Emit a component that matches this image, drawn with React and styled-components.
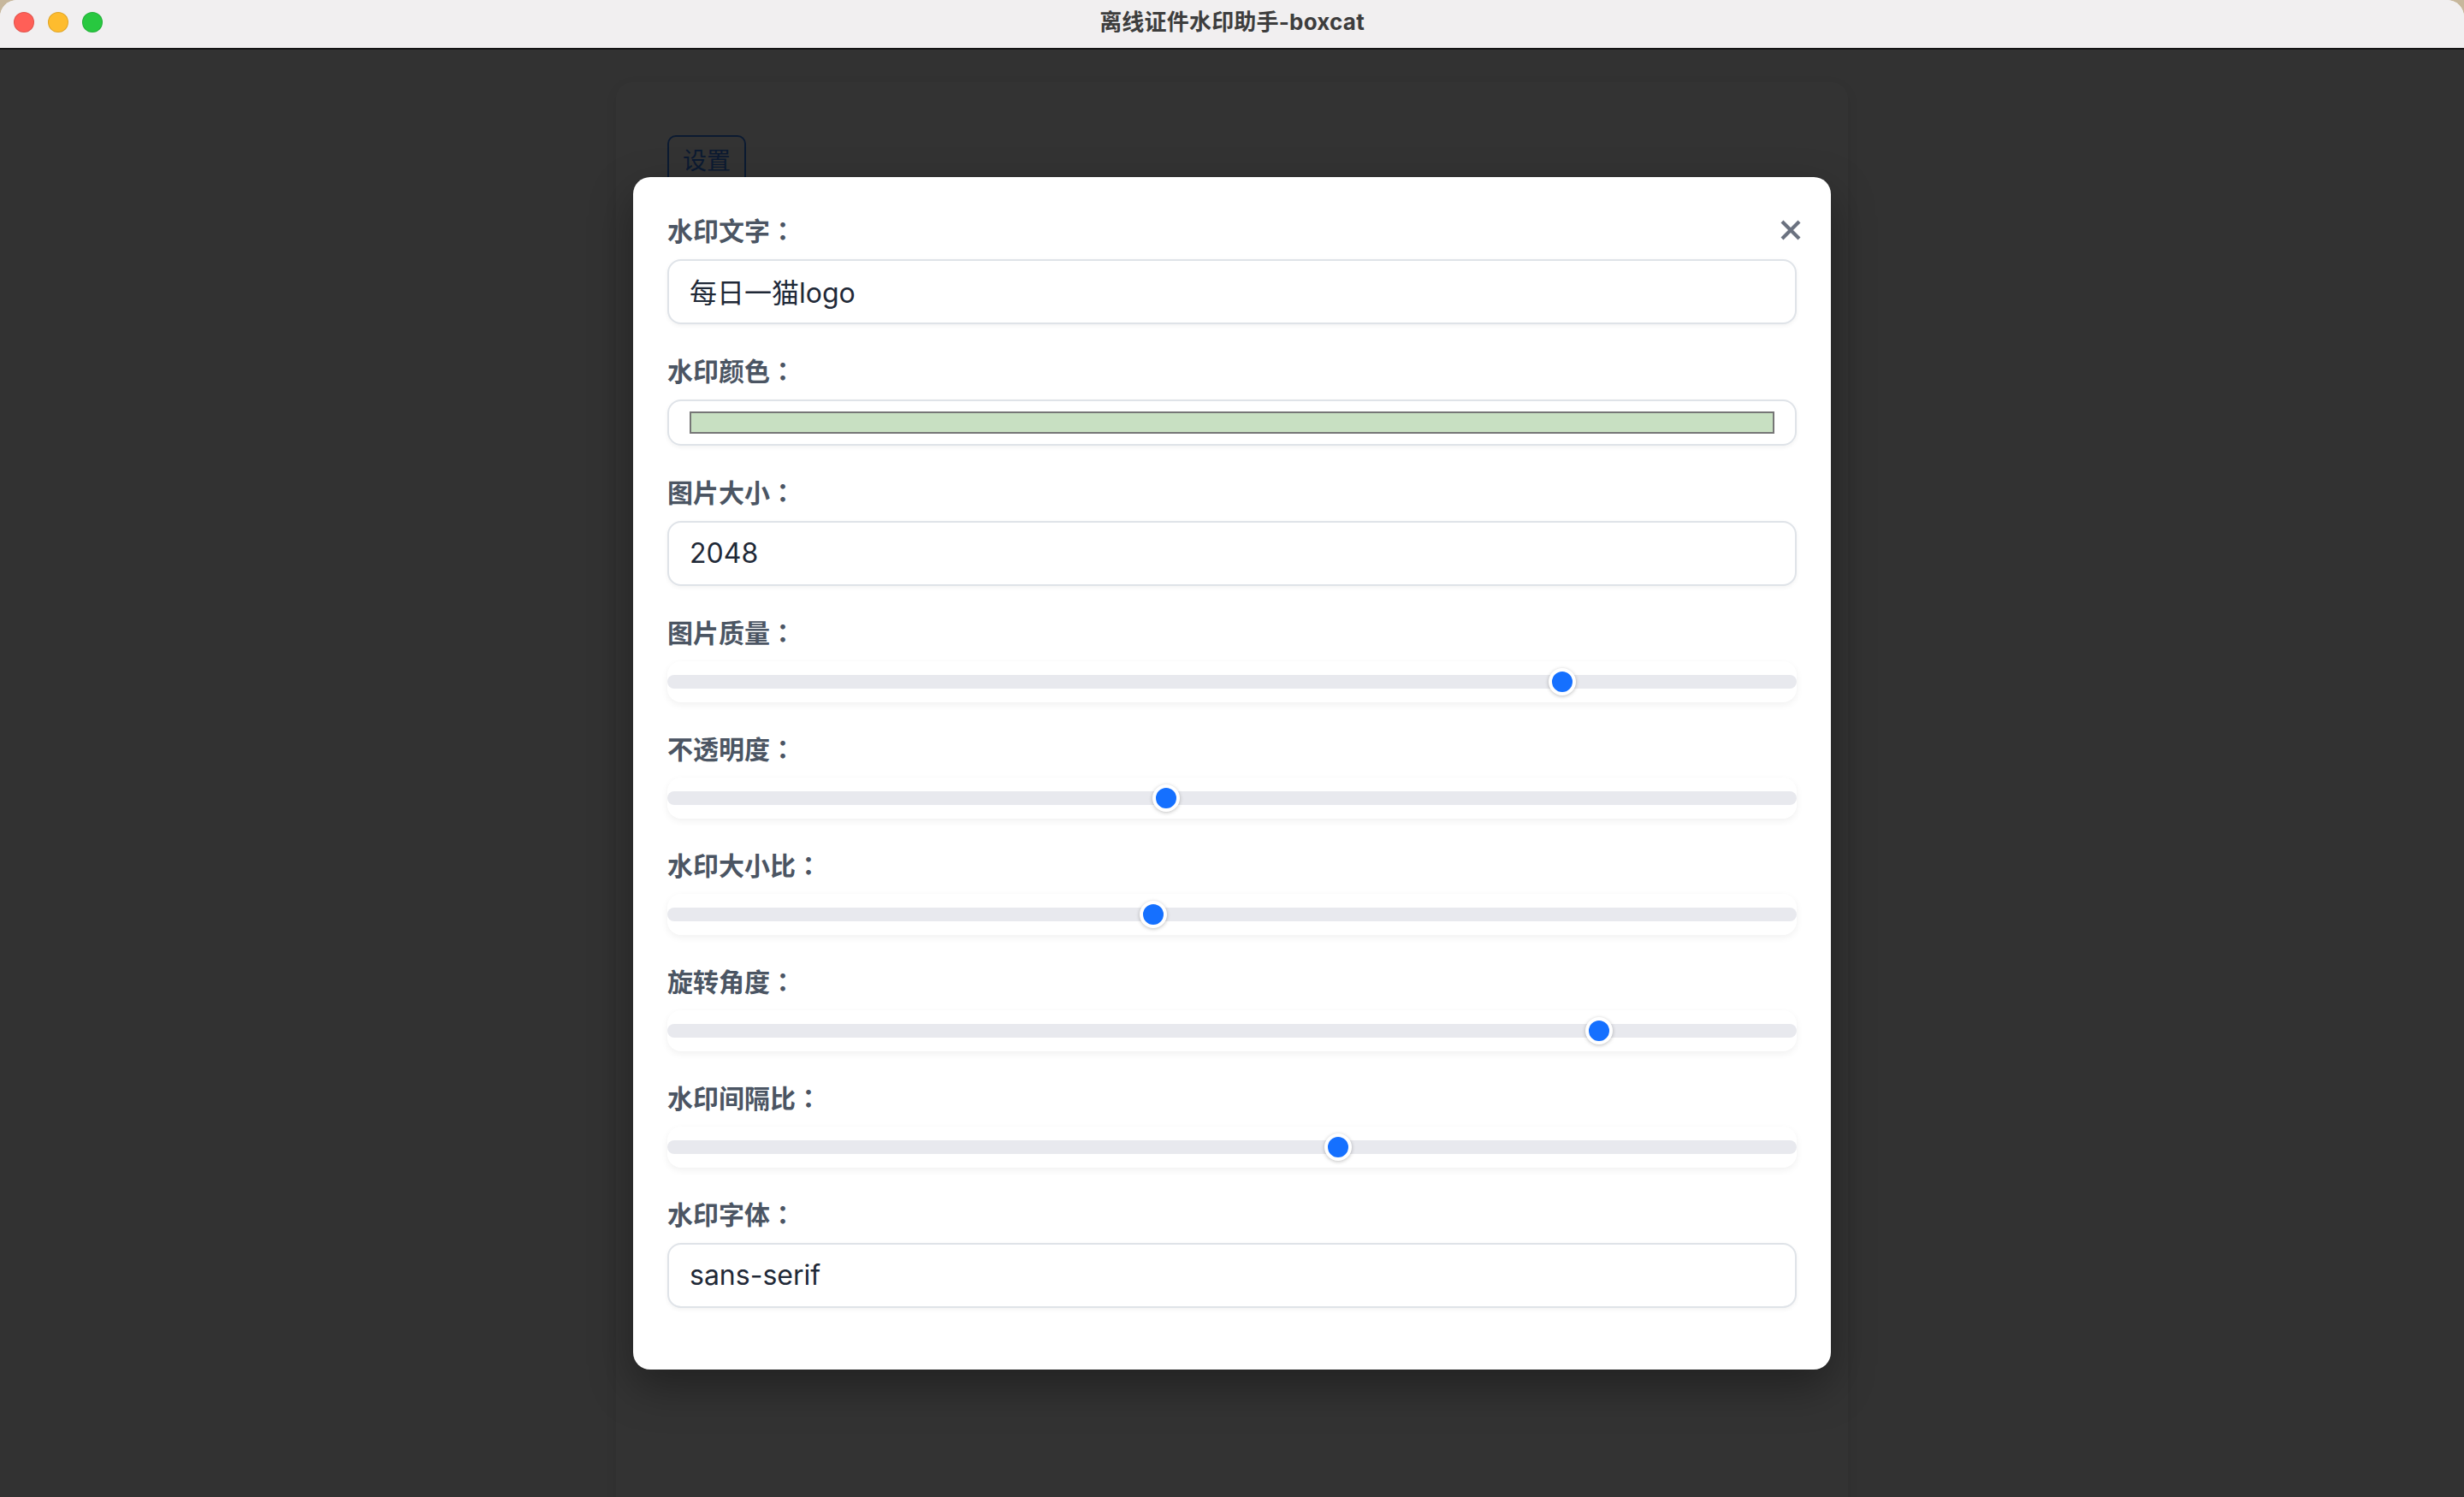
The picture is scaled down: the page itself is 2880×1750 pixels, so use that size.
import React from 'react';
import styled, { createGlobalStyle } from 'styled-components';

const GlobalStyle = createGlobalStyle`
  * {
    box-sizing: border-box;
  }
  html,
  body {
    margin: 0;
    padding: 0;
    background: #c7b79c;
  }
  body {
    font-family: Inter, 'Noto Sans CJK SC', sans-serif;
  }
`;

const Window = styled.div`
  width: 2880px;
  height: 1750px;
  display: flex;
  flex-direction: column;
  border-radius: 20px 20px 0 0;
  overflow: hidden;
  background: #f8f8f8;
`;

const TitleBar = styled.div`
  height: 58px;
  flex-shrink: 0;
  display: grid;
  grid-template-columns: 1fr auto 1fr;
  align-items: center;
  padding: 0 16px 4px;
  background: #f1eff0;
  border-bottom: 2px solid #151515;
`;

const Lights = styled.div`
  display: flex;
  gap: 16px;
`;

const Light = styled.span`
  width: 24px;
  height: 24px;
  border-radius: 50%;
  background: ${(p) => p.color};
  box-shadow: inset 0 0 0 1px rgba(0, 0, 0, 0.12);
`;

const WindowTitle = styled.div`
  font-family: Inter, 'Noto Sans CJK SC', sans-serif;
  font-size: 26px;
  line-height: 30px;
  font-weight: 700;
  color: #3d3d3d;
  letter-spacing: 0.2px;
`;

const Content = styled.div`
  flex: 1;
  position: relative;
  display: flex;
  justify-content: center;
  padding-top: 38px;
  overflow: hidden;
`;

const Card = styled.div`
  width: 1440px;
  height: 1800px;
  padding: 62px 60px;
  border-radius: 20px;
  background: #fff;
  box-shadow: 0 4px 18px rgba(0, 0, 0, 0.08);
`;

const SettingsButton = styled.button`
  padding: 8px 16px;
  font-family: Inter, 'Noto Sans CJK SC', sans-serif;
  font-size: 28px;
  line-height: 40px;
  color: #3b82f6;
  background: transparent;
  border: 2px solid #3b82f6;
  border-radius: 10px;
`;

const Overlay = styled.div`
  position: absolute;
  inset: 0;
  display: flex;
  align-items: center;
  justify-content: center;
  background: rgba(0, 0, 0, 0.8);
`;

const Modal = styled.div`
  position: relative;
  width: 1400px;
  padding: 40px;
  border-radius: 20px;
  background: #fff;
  box-shadow: 0 20px 50px rgba(0, 0, 0, 0.35);
`;

const CloseButton = styled.button`
  position: absolute;
  top: 50px;
  right: 35px;
  width: 24px;
  height: 24px;
  padding: 0;
  border: none;
  background: none;
  display: flex;
`;

const Field = styled.div`
  margin-bottom: 32px;
`;

const Label = styled.label`
  display: block;
  height: 48px;
  margin-bottom: 8px;
  font-family: 'Noto Sans CJK SC', sans-serif;
  font-size: 30px;
  line-height: 43px;
  font-weight: 700;
  color: #4b5563;
`;

const Colon = styled.span`
  font-family: 'Noto Sans CJK JP', sans-serif;
  line-height: 0;
`;

const TextInput = styled.input`
  display: block;
  width: 100%;
  height: 76px;
  padding: 0 24px 2px;
  font-family: Inter, 'Noto Sans CJK SC', sans-serif;
  font-size: 32px;
  color: #1f2937;
  background: #fff;
  border: 2px solid #dfe3e8;
  border-radius: 16px;
  box-shadow: 0 2px 5px rgba(0, 0, 0, 0.05);
  outline: none;
`;

const ColorBox = styled.div`
  height: 54px;
  padding: 12px 24px;
  border: 2px solid #dfe3e8;
  border-radius: 16px;
  box-shadow: 0 2px 5px rgba(0, 0, 0, 0.05);
`;

const Swatch = styled.div`
  height: 26px;
  border: 2px solid #767676;
  background: ${(p) => p.color};
`;

const SliderBox = styled.div`
  position: relative;
  height: 48px;
  display: flex;
  align-items: center;
  border-radius: 16px;
  background: #fff;
  box-shadow: 0 3px 8px rgba(0, 0, 0, 0.06);
`;

const Track = styled.div`
  width: 100%;
  height: 16px;
  border-radius: 8px;
  background: #e8e9ee;
`;

const Thumb = styled.span`
  position: absolute;
  top: 50%;
  width: 32px;
  height: 32px;
  margin-top: -16px;
  border-radius: 50%;
  background: #1570ff;
  border: 4px solid #fff;
  box-shadow: 0 1px 4px rgba(0, 0, 0, 0.25);
`;

const sliders = [
  { label: '图片质量', min: 0, max: 1, value: 0.8 },
  { label: '不透明度', min: 0, max: 1, value: 0.44 },
  { label: '水印大小比', min: 0.1, max: 0.8, value: 0.4 },
  { label: '旋转角度', min: 0, max: 360, value: 300 },
  { label: '水印间隔比', min: 0, max: 5, value: 2.98 },
];

const FieldLabel = ({ children }) => (
  <Label>
    {children}
    <Colon>：</Colon>
  </Label>
);

const Slider = ({ min, max, value }) => {
  const ratio = (value - min) / (max - min);
  return (
    <SliderBox>
      <Track />
      <Thumb style={{ left: `calc(${ratio} * (100% - 32px))` }} />
    </SliderBox>
  );
};

const App = () => {
  return (
    <>
      <GlobalStyle />
      <Window>
        <TitleBar>
          <Lights>
            <Light color="#ff5f57" />
            <Light color="#febc2e" />
            <Light color="#28c840" />
          </Lights>
          <WindowTitle>离线证件水印助手-boxcat</WindowTitle>
          <div />
        </TitleBar>
        <Content>
          <Card>
            <SettingsButton>设置</SettingsButton>
          </Card>
          <Overlay>
            <Modal>
              <CloseButton aria-label="关闭">
                <svg width="24" height="24" viewBox="0 0 24 24">
                  <path
                    d="M2 2 22 22M22 2 2 22"
                    stroke="#6b7280"
                    strokeWidth="4.2"
                    fill="none"
                  />
                </svg>
              </CloseButton>
              <Field>
                <FieldLabel>水印文字</FieldLabel>
                <TextInput defaultValue="每日一猫logo" />
              </Field>
              <Field>
                <FieldLabel>水印颜色</FieldLabel>
                <ColorBox>
                  <Swatch color="#c8e0c2" />
                </ColorBox>
              </Field>
              <Field>
                <FieldLabel>图片大小</FieldLabel>
                <TextInput defaultValue="2048" />
              </Field>
              {sliders.map((s) => (
                <Field key={s.label}>
                  <FieldLabel>{s.label}</FieldLabel>
                  <Slider min={s.min} max={s.max} value={s.value} />
                </Field>
              ))}
              <Field>
                <FieldLabel>水印字体</FieldLabel>
                <TextInput defaultValue="sans-serif" />
              </Field>
            </Modal>
          </Overlay>
        </Content>
      </Window>
    </>
  );
};

export default App;
